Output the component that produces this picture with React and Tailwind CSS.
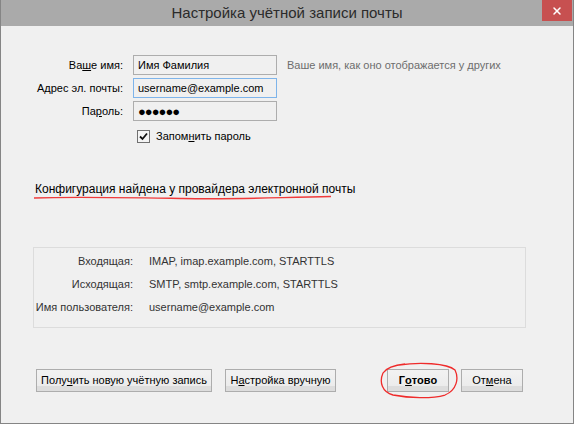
import { X } from 'lucide-react'

// field row in the account form: right-aligned label, input, optional hint
function Field({ label, value, focused, hint, secret }) {
  return (
    <div className="flex h-[20px] items-center">
      <div className="w-[100px] whitespace-nowrap pr-[10px] text-right text-black">{label}</div>
      <div
        className={
          'flex h-[20px] w-[144px] items-center border px-[4px] ' +
          (focused ? 'border-[#7eb4ea] bg-[#f0f0f0]' : 'border-[#adadad] bg-[#f0f0f0]')
        }
      >
        {secret ? (
          <span className="text-[13px] leading-none tracking-[-1px] text-black">●●●●●●</span>
        ) : (
          <span className="text-black">{value}</span>
        )}
      </div>
      {hint && <div className="whitespace-nowrap pl-[10px] text-[#6d6d6d]">{hint}</div>}
    </div>
  )
}

function Btn({ children, className = '', bold }) {
  return (
    <button
      className={
        'flex h-[23px] items-center justify-center whitespace-nowrap border border-[#adadad] bg-[linear-gradient(to_bottom,#f2f2f2_0%,#ececec_75%,#dddddd_78%,#dddddd_100%)] text-black ' +
        (bold ? 'font-bold ' : '') +
        className
      }
    >
      {children}
    </button>
  )
}

function Info({ label, value }) {
  return (
    <div className="flex h-[23px] items-center">
      <div className="w-[99px] whitespace-nowrap text-right">{label}</div>
      <div className="pl-[16px]">{value}</div>
    </div>
  )
}

export default function App() {
  return (
    <div
      className="flex h-[424px] w-[574px] flex-col border-x border-b border-[#858585] bg-[#f0f0f0] text-[11px]"
      style={{ fontFamily: '"Liberation Sans", Arial, sans-serif' }}
    >
      <div className="relative flex h-[26px] shrink-0 items-center justify-center bg-[#aaaaaa]">
        <span className="text-[15px] text-[#2b2b2b]">Настройка учётной записи почты</span>
        <div className="absolute right-[1px] top-0 flex h-[21px] w-[30px] items-center justify-center bg-[#c75050]">
          <X size={12} strokeWidth={3} color="#ffffff" />
        </div>
      </div>

      <div className="flex flex-1 flex-col pl-[32px] pr-[48px] pt-[29px]">
        <div className="flex flex-col gap-[3px]">
          <Field
            label={<>Ва<u>ш</u>е имя:</>}
            value="Имя Фамилия"
            hint="Ваше имя, как оно отображается у других"
          />
          <Field label={<>А<u>д</u>рес эл. почты:</>} value="username@example.com" focused />
          <Field label={<>Па<u>р</u>оль:</>} secret />
        </div>

        <div className="mt-[7px] flex items-center pl-[104px]">
          <div className="flex h-[13px] w-[13px] items-center justify-center border border-[#707070] bg-[#f4f4f4]">
            <svg width="9" height="9" viewBox="0 0 9 9">
              <path d="M1 4.5 L3.5 7 L8 1.5" fill="none" stroke="#111" strokeWidth="1.8" />
            </svg>
          </div>
          <span className="pl-[6px] text-black">
            Запом<u>н</u>ить пароль
          </span>
        </div>

        <div className="relative mt-[35px] self-start pl-[2px] text-[12px] text-black">
          Конфигурация найдена у провайдера электронной почты
          <svg
            className="absolute left-0 top-[15px]"
            width="300"
            height="6"
            viewBox="0 0 300 6"
          >
            <path
              d="M1 3 C 40 1.5, 90 2.5, 150 3.5 S 240 2.5, 298 1.5"
              fill="none"
              stroke="#f03a3a"
              strokeWidth="1.4"
            />
          </svg>
        </div>

        <div className="mt-[49px] flex w-[493px] flex-col border border-[#dcdcdc] pb-[8px] pt-[2px] text-[#333333]">
          <Info label="Входящая:" value="IMAP, imap.example.com, STARTTLS" />
          <Info label="Исходящая:" value="SMTP, smtp.example.com, STARTTLS" />
          <Info label="Имя пользователя:" value="username@example.com" />
        </div>

        <div className="mt-[41px] flex items-center pl-[3px]">
          <Btn className="w-[176px]">
            Полу<u>ч</u>ить новую учётную запись
          </Btn>
          <Btn className="ml-[13px] w-[111px]">
            Н<u>а</u>стройка вручную
          </Btn>
          <div className="relative ml-[51px]">
            <Btn className="w-[62px]" bold>
              Г<u>о</u>тово
            </Btn>
            <svg
              className="absolute left-[-8px] top-[-7px]"
              width="80"
              height="37"
              viewBox="0 0 80 37"
            >
              <path
                d="M20 3 C 40 0, 68 1, 76 8 C 80 16, 78 28, 66 33 C 52 37, 30 36, 14 33 C 3 30, 0 20, 4 11 C 8 5, 16 3, 26 2"
                fill="none"
                stroke="#ef2b2b"
                strokeWidth="1.3"
              />
            </svg>
          </div>
          <Btn className="ml-[12px] w-[62px]">
            От<u>м</u>ена
          </Btn>
        </div>
      </div>
    </div>
  )
}
